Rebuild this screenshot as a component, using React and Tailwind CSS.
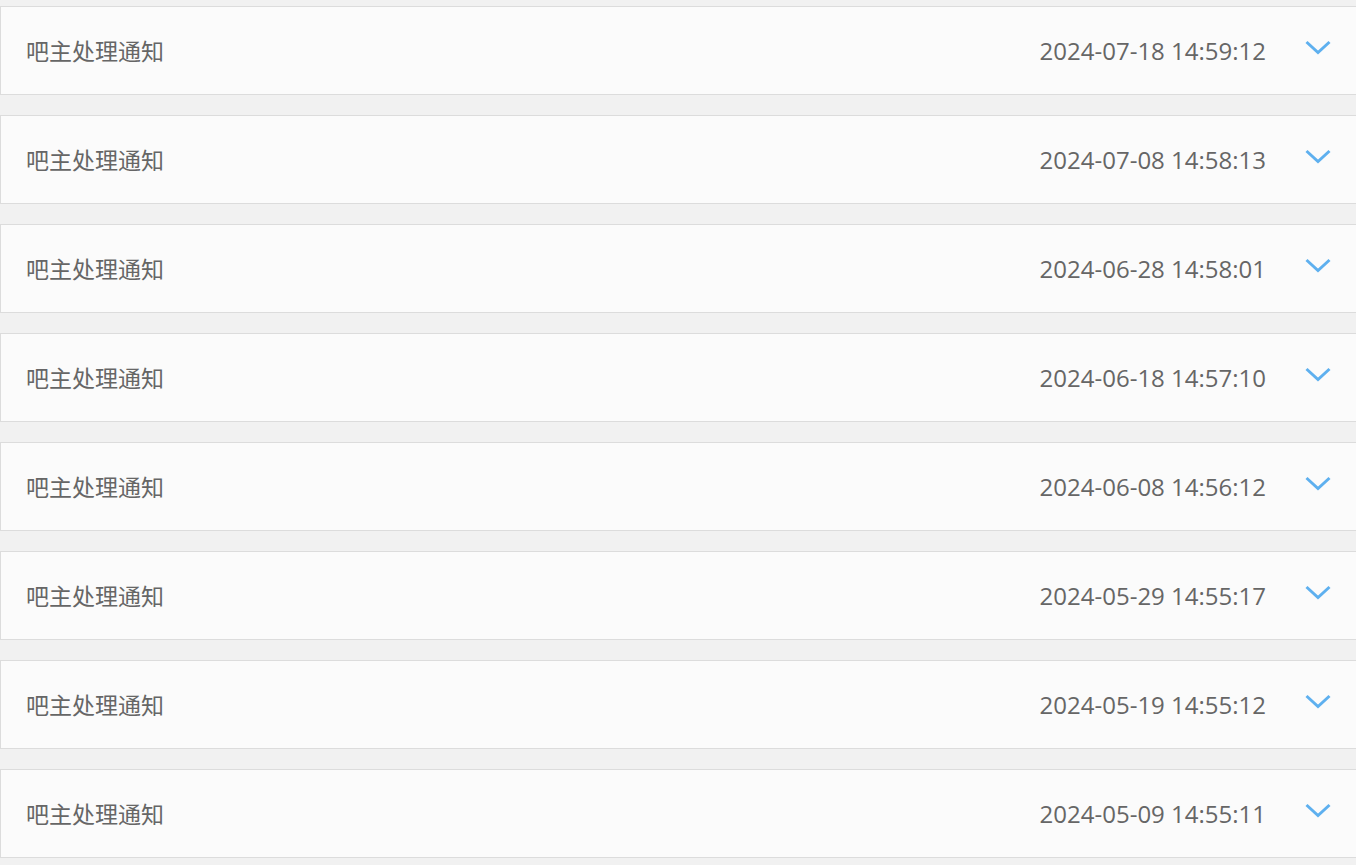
import React from "react";

const dates = [
  "2024-07-18 14:59:12",
  "2024-07-08 14:58:13",
  "2024-06-28 14:58:01",
  "2024-06-18 14:57:10",
  "2024-06-08 14:56:12",
  "2024-05-29 14:55:17",
  "2024-05-19 14:55:12",
  "2024-05-09 14:55:11",
];

function Chevron() {
  return (
    <svg width="26" height="16" viewBox="0 0 26 16" className="mb-[7px]">
      <path d="M1.5 3 L13 13.5 L24.5 3" fill="none" stroke="#5eb0ef" strokeWidth="3" strokeLinecap="butt" strokeLinejoin="miter" />
    </svg>
  );
}

export default function App() {
  return (
    <div
      className="min-h-[865px] w-full bg-[#f1f1f1] pt-[6px] overflow-hidden"
      style={{ fontFamily: '"Open Sans", "Noto Sans CJK SC", sans-serif' }}
    >
      <div className="flex flex-col gap-[20px]">
        {dates.map((d) => (
          <div
            key={d}
            className="h-[89px] w-full flex items-center border border-r-0 border-[#dcdcdc] bg-[#fbfbfb] pl-[25px] pr-[25px]"
          >
            <span className="text-[23px] text-[#666666] leading-none pt-[2px]">吧主处理通知</span>
            <span className="ml-auto text-[24px] text-[#666666] leading-none pt-[1px]">{d}</span>
            <span className="ml-[39px] flex items-center">
              <Chevron />
            </span>
          </div>
        ))}
      </div>
    </div>
  );
}
